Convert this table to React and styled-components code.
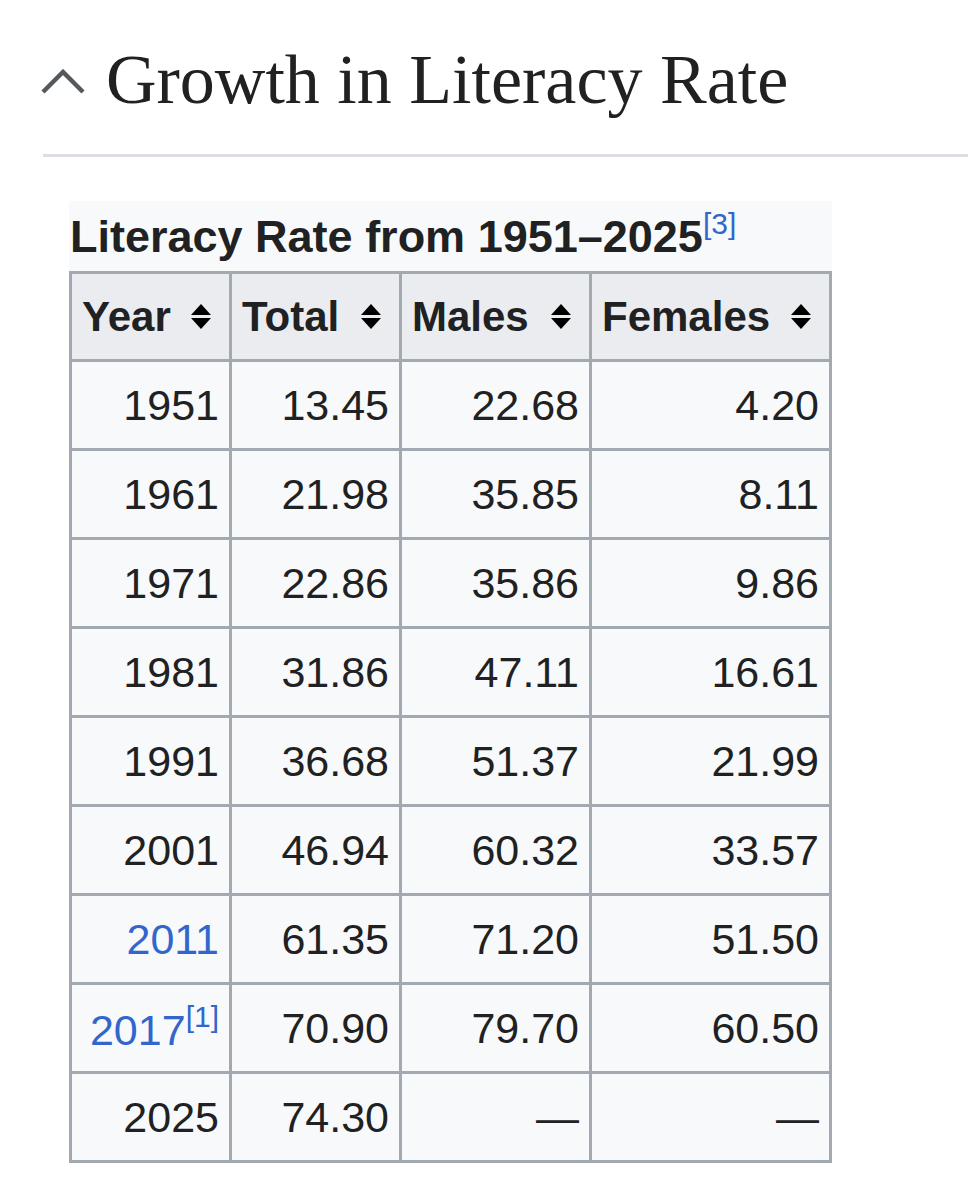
import React from 'react';
import styled, { createGlobalStyle } from 'styled-components';

const rows = [
  { year: '1951', total: '13.45', males: '22.68', females: '4.20' },
  { year: '1961', total: '21.98', males: '35.85', females: '8.11' },
  { year: '1971', total: '22.86', males: '35.86', females: '9.86' },
  { year: '1981', total: '31.86', males: '47.11', females: '16.61' },
  { year: '1991', total: '36.68', males: '51.37', females: '21.99' },
  { year: '2001', total: '46.94', males: '60.32', females: '33.57' },
  { year: '2011', total: '61.35', males: '71.20', females: '51.50', link: true },
  { year: '2017', total: '70.90', males: '79.70', females: '60.50', link: true, note: '1' },
  { year: '2025', total: '74.30', males: '—', females: '—' },
];

const columns = [
  { label: 'Year', width: 160 },
  { label: 'Total', width: 170 },
  { label: 'Males', width: 190 },
  { label: 'Females', width: 240 },
];

const SortIcon = () => (
  <svg width="22" height="25" viewBox="0 0 22 25">
    <path d="M11 0 L21 11 L1 11 Z" fill="#000" />
    <path d="M1 14 L21 14 L11 25 Z" fill="#000" />
  </svg>
);

const App = () => (
  <>
    <GlobalStyle />
    <Page>
      <SectionHeading>
        <Chevron width="46" height="26" viewBox="0 0 46 26">
          <path d="M3 23 L23 3 L43 23" fill="none" stroke="#54595d" strokeWidth="4.5" />
        </Chevron>
        <Title>Growth in Literacy Rate</Title>
      </SectionHeading>
      <Divider />
      <Table>
        <colgroup>
          {columns.map((c) => (
            <col key={c.label} style={{ width: c.width }} />
          ))}
        </colgroup>
        <Caption>
          Literacy Rate from 1951–2025<Ref>[3]</Ref>
        </Caption>
        <thead>
          <tr>
            {columns.map((c) => (
              <HeadCell key={c.label}>
                <HeadInner>
                  <span>{c.label}</span>
                  <SortIcon />
                </HeadInner>
              </HeadCell>
            ))}
          </tr>
        </thead>
        <tbody>
          {rows.map((r) => (
            <tr key={r.year}>
              <Cell>
                <YearText $link={r.link}>{r.year}</YearText>
                {r.note && <Ref>[{r.note}]</Ref>}
              </Cell>
              <Cell>{r.total}</Cell>
              <Cell>{r.males}</Cell>
              <Cell>{r.females}</Cell>
            </tr>
          ))}
        </tbody>
      </Table>
    </Page>
  </>
);

export default App;

const GlobalStyle = createGlobalStyle`
  body {
    margin: 0;
    background: #ffffff;
    color: #202122;
    font-family: 'Liberation Sans', Arial, sans-serif;
  }
`;

const Page = styled.div`
  width: 968px;
  padding-top: 34px;
`;

const SectionHeading = styled.div`
  display: flex;
  align-items: center;
  padding-left: 40px;
  gap: 20px;
  height: 92px;
`;

const Chevron = styled.svg`
  flex-shrink: 0;
  margin-top: 4px;
`;

const Title = styled.h2`
  margin: 0;
  font-family: 'Liberation Serif', 'Times New Roman', serif;
  font-weight: normal;
  font-size: 70px;
  line-height: 1;
  color: #202122;
`;

const Divider = styled.div`
  margin: 28px 0 0 43px;
  height: 3px;
  background: #dcdee3;
`;

const Table = styled.table`
  margin: 44px 0 0 69px;
  width: 760px;
  table-layout: fixed;
  border-collapse: collapse;
  border: 3px solid #a2a9b1;
  background: #f8f9fa;
  font-size: 43px;
  color: #202122;
`;

const Caption = styled.caption`
  background: #f8f9fa;
  font-weight: bold;
  font-size: 45px;
  text-align: left;
  padding: 8px 0 7px 1px;
  white-space: nowrap;
  line-height: 55px;
`;

const Ref = styled.sup`
  color: #3366cc;
  font-weight: normal;
  font-size: 30px;
  line-height: 1;
  vertical-align: 18px;
`;

const HeadCell = styled.th`
  background: #eaecf0;
  border: 3px solid #a2a9b1;
  padding: 0 17px 0 10px;
  height: 85px;
  text-align: left;
  font-weight: bold;
  font-size: 42px;
`;

const HeadInner = styled.div`
  display: flex;
  align-items: center;
  justify-content: space-between;
`;

const Cell = styled.td`
  border: 3px solid #a2a9b1;
  padding: 0 10px;
  height: 86px;
  text-align: right;
  white-space: nowrap;
`;

const YearText = styled.span`
  color: ${(p) => (p.$link ? '#3366cc' : '#202122')};
`;
